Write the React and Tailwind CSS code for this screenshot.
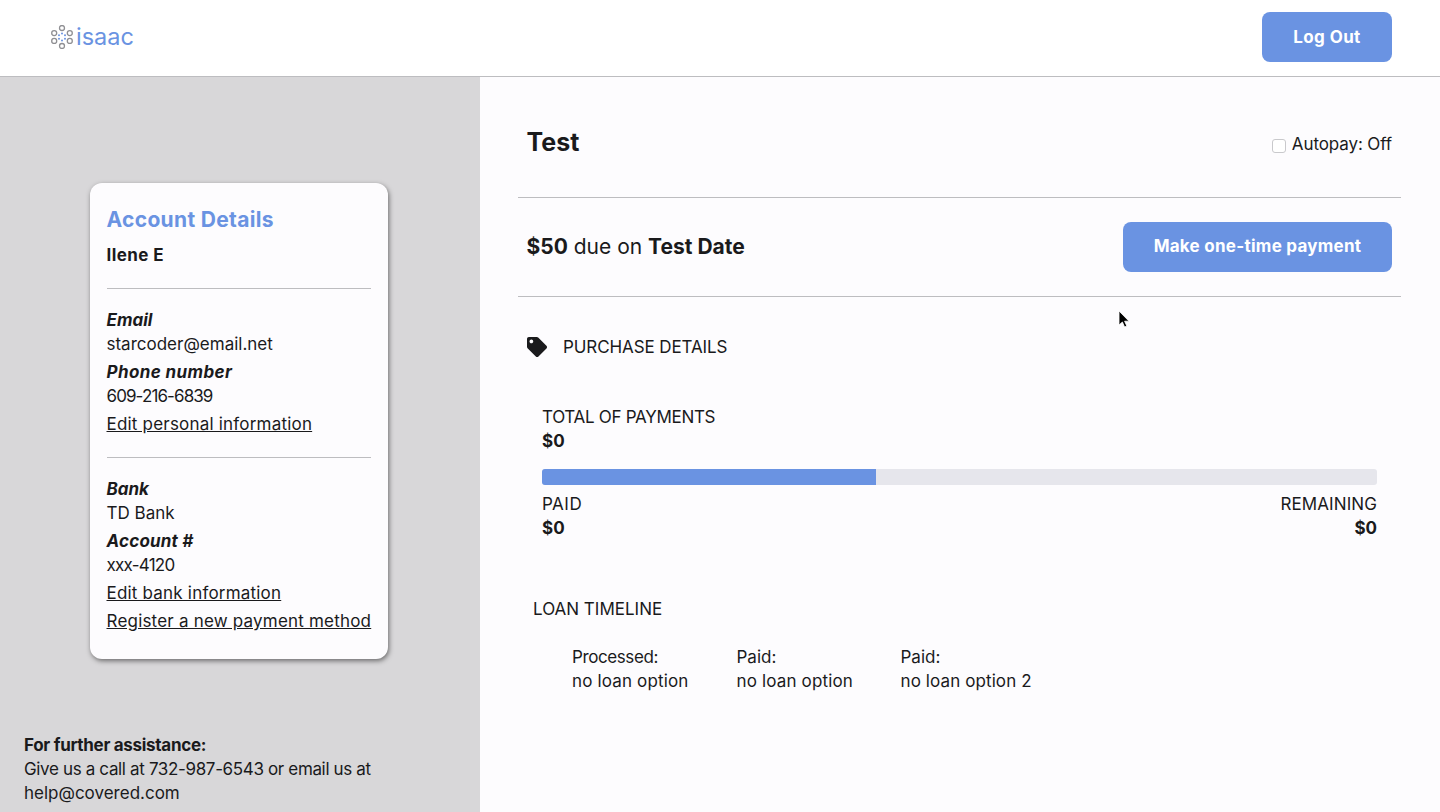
import { useState } from "react";
import { FaTag } from "react-icons/fa";

const font = { fontFamily: "Inter, 'Open Sans', sans-serif" };

function Logo() {
  const dots = [
    [12, 3], [19.8, 8.1], [19.8, 15.9], [12, 21], [4.2, 15.9], [4.2, 8.1],
  ];
  const inner = [
    [12, 8.6], [15, 10.3], [15, 13.7], [12, 15.4], [9, 13.7], [9, 10.3],
  ];
  return (
    <div className="flex items-center gap-[2px]">
      <svg width="24" height="24" viewBox="0 0 24 24" fill="none">
        {dots.map(([cx, cy], i) => (
          <circle key={i} cx={cx} cy={cy} r="2.5" stroke="#8f8f93" strokeWidth="1.3" />
        ))}
        {inner.map(([cx, cy], i) => (
          <circle key={i} cx={cx} cy={cy} r="1" fill="#6b93e0" />
        ))}
      </svg>
      <span className="text-[23.5px] leading-none text-[#6a93e2]">isaac</span>
    </div>
  );
}

function Field({ label, value, labelClass = "", valueClass = "" }) {
  return (
    <>
      <p className={`text-[17px] leading-6 font-bold italic ${labelClass}`}>{label}</p>
      <p className={`text-[17px] leading-6 ${valueClass}`}>{value}</p>
    </>
  );
}

function CardLink({ children }) {
  return (
    <a className="block text-[17px] leading-6 underline mt-[4px] tracking-[0.2px] whitespace-nowrap">{children}</a>
  );
}

export default function App() {
  const [autopay, setAutopay] = useState(false);

  return (
    <div className="h-[812px] overflow-hidden flex flex-col bg-[#fdfcfe] text-[#1a1a1c] relative" style={font}>
      {/* Header */}
      <header className="h-[77px] shrink-0 flex items-center justify-between pl-[50px] pr-[48px] pb-[2px] bg-white border-b border-[#bdbdc0]">
        <Logo />
        <button className="w-[130px] h-[50px] rounded-lg bg-[#6a93e2] text-white text-[17px] font-bold tracking-[0.4px] pt-[2px]">Log Out</button>
      </header>

      <div className="flex flex-1 min-h-0">
        {/* Sidebar */}
        <aside className="w-[480px] shrink-0 bg-[#d8d7d9] flex flex-col pt-[106px]">
          <div className="ml-[90px] w-[298px] h-[476px] bg-[#fdfcfe] rounded-xl shadow-[1px_2px_5px_rgba(0,0,0,0.5)] pl-[16.5px] pr-[17px] pt-[23px]">
            <h2 className="text-[21px] leading-7 font-bold text-[#6a93e2] tracking-[0.33px]">Account Details</h2>
            <p className="text-[17px] leading-6 font-bold mt-[9px] tracking-[0.4px]">Ilene E</p>
            <hr className="border-[#bdbdc0] mt-[21px] mb-[19px]" />
            <Field label="Email" value="starcoder@email.net" />
            <div className="mt-[4px]">
              <Field label="Phone number" value="609-216-6839" labelClass="tracking-[0.4px]" valueClass="tracking-[-0.9px]" />
            </div>
            <CardLink>Edit personal information</CardLink>
            <hr className="border-[#bdbdc0] mt-[21px] mb-[19px]" />
            <Field label="Bank" value="TD Bank" />
            <div className="mt-[4px]">
              <Field label="Account #" value="xxx-4120" labelClass="tracking-[0.2px]" valueClass="tracking-[-0.75px]" />
            </div>
            <CardLink>Edit bank information</CardLink>
            <CardLink>Register a new payment method</CardLink>
          </div>
          <div className="ml-[24px] mt-[74px] text-[17px] leading-6">
            <p className="font-bold tracking-[-0.3px]">For further assistance:</p>
            <p className="tracking-[-0.35px]">Give us a call at 732-987-6543 or email us at</p>
            <p>help@covered.com</p>
          </div>
        </aside>

        {/* Main */}
        <main className="flex-1 pl-[38px] pr-[39px]">
          <section className="h-[121px] border-b border-[#bdbdc0] flex items-center justify-between pl-[8.5px] pr-[9px] pt-[12px]">
            <h1 className="text-[25px] font-bold">Test</h1>
            <label className="flex items-center gap-[6px] text-[17px] mt-[4px] tracking-[-0.1px]">
              <input
                type="checkbox"
                checked={autopay}
                onChange={() => setAutopay(!autopay)}
                className="appearance-none w-[14px] h-[14px] mt-[2px] rounded-[3px] border border-[#c9c9cc] bg-white"
              />
              Autopay: Off
            </label>
          </section>

          <section className="h-[99px] border-b border-[#bdbdc0] flex items-center justify-between pl-[8.5px] pr-[9px]">
            <p className="text-[21px]">
              <span className="font-bold">$50</span> due on <span className="font-bold">Test Date</span>
            </p>
            <button className="w-[269px] h-[50px] rounded-lg bg-[#6a93e2] text-white text-[17px] font-bold tracking-[0.27px]">
              Make one-time payment
            </button>
          </section>

          <section className="flex items-center gap-[16px] pl-[9px] mt-[38px]">
            <FaTag size={20} className="text-[#1a1a1c]" />
            <span className="text-[17px] leading-6 tracking-[-0.1px]">PURCHASE DETAILS</span>
          </section>

          <section className="px-[24px] mt-[46px]">
            <p className="text-[17px] leading-6 tracking-[-0.3px]">TOTAL OF PAYMENTS</p>
            <p className="text-[17px] leading-6 font-bold">$0</p>
            <div className="h-4 mt-[16px] rounded-[3px] bg-[#e6e6ec] overflow-hidden">
              <div className="h-full w-[40%] bg-[#6a93e2]" />
            </div>
            <div className="flex justify-between mt-[7px] text-[17px] leading-6">
              <div>
                <p className="tracking-[0.5px]">PAID</p>
                <p className="font-bold">$0</p>
              </div>
              <div className="text-right">
                <p className="tracking-[0.1px]">REMAINING</p>
                <p className="font-bold">$0</p>
              </div>
            </div>
          </section>

          <section className="pl-[15px] mt-[57px]">
            <p className="text-[17px] leading-6">LOAN TIMELINE</p>
            <div className="flex mt-[24px] pl-[39px] text-[17px] leading-6">
              <div className="w-[164.5px]">
                <p className="tracking-[-0.4px]">Processed:</p>
                <p className="tracking-[0.15px]">no loan option</p>
              </div>
              <div className="w-[164px]">
                <p>Paid:</p>
                <p className="tracking-[0.15px]">no loan option</p>
              </div>
              <div>
                <p>Paid:</p>
                <p className="tracking-[0.1px]">no loan option 2</p>
              </div>
            </div>
          </section>
        </main>
      </div>

      {/* Mouse pointer captured in the screenshot */}
      <svg className="absolute left-[1118px] top-[310px]" width="12" height="19" viewBox="0 0 12 19">
        <path d="M1 1v14l3.4-3 2.2 5 2.2-1-2.2-4.8H11z" fill="#000" stroke="#fff" strokeWidth="0.8" />
      </svg>
    </div>
  );
}
